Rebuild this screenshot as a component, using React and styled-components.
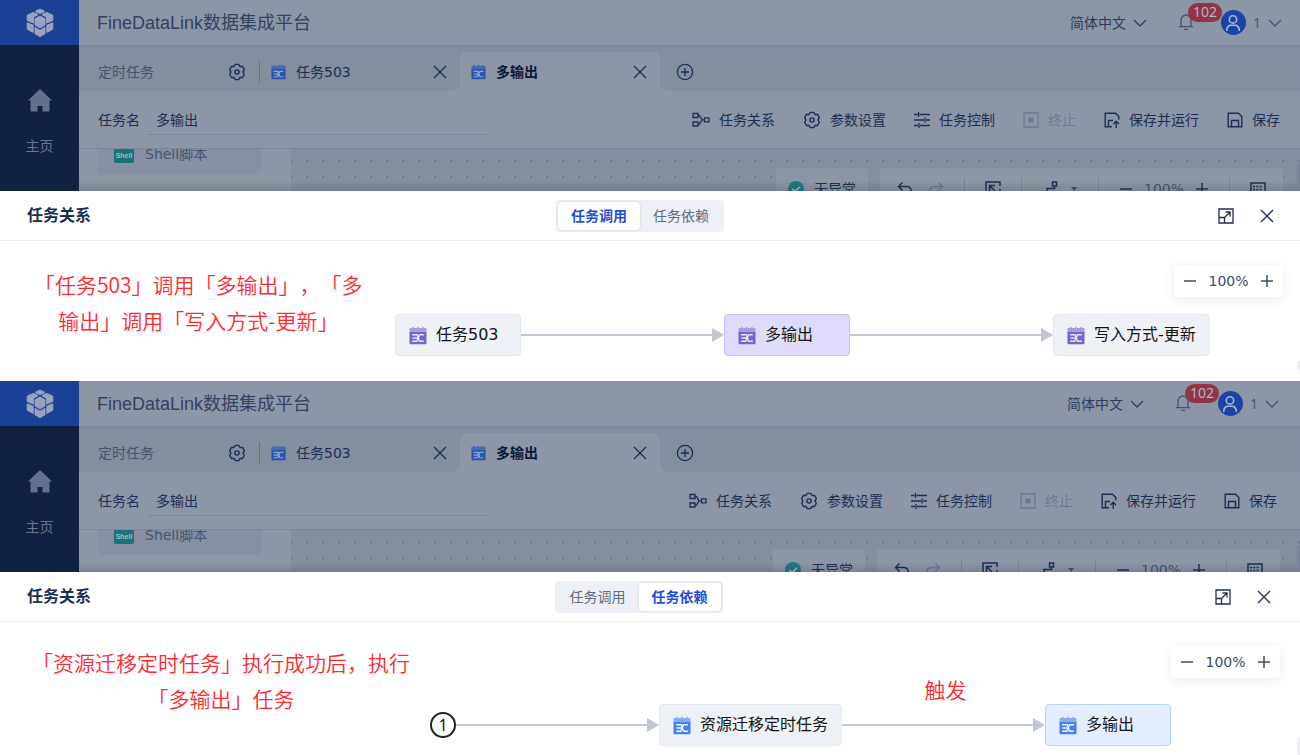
import React from "react";
import styled, { createGlobalStyle, css } from "styled-components";

const c = {
  ink: "#1c2f52",
  inkSoft: "#46536e",
  surface: "#8d96a7",
  bar: "#838e9f",
  line: "#7c879a",
  brand: "#1b4196",
  side: "#112142",
  edge: "#c0c7d3",
  red: "#ff2a30",
};

const GlobalStyle = createGlobalStyle`
  * { box-sizing: border-box; }
  body {
    margin: 0;
    background: #fff;
    overflow: hidden;
    font-family: "DejaVu Sans", "Noto Sans CJK SC", sans-serif;
    font-size: 14px;
    line-height: 20px;
    color: ${c.ink};
  }
  button, input, select { font: inherit; color: inherit; margin: 0; padding: 0; border: 0; background: none; }
  svg { display: block; flex: none; }
`;

/* ---------- icons ---------- */

const Svg = ({ w = 16, h = w, box, children, sw = 1.3, color = "currentColor" }) => (
  <svg width={w} height={h} viewBox={box || `0 0 ${w} ${h}`} fill="none" stroke={color} strokeWidth={sw} aria-hidden="true">
    {children}
  </svg>
);

const LogoIcon = () => (
  <svg width="28" height="30" viewBox="0 0 28 30" fill="#98a4bd" stroke="#98a4bd" strokeWidth="1" strokeLinejoin="round" aria-hidden="true">
    <path d="M9.6 3 14 1.2 18.4 3 18 4 14 5.6 10 4Z" />
    <path d="M7.4 4.4 12 6.6 7.4 9.4V15L1.2 12.4V7.2Z" />
    <path d="M20.6 4.4 16 6.6 20.6 9.4V15L26.8 12.4V7.2Z" />
    <path d="M14 8 19 10.8V17L14 19.8 9 17V10.8Z" />
    <path d="M1.2 14.8 7.2 17.2V24.4L1.2 21.2Z" />
    <path d="M26.8 14.8 20.8 17.2V24.4L26.8 21.2Z" />
    <path d="M9 19.4 14 22.2 19 19.4V25.8L14 28.6 9 25.8Z" />
  </svg>
);

const HomeIcon = () => (
  <svg width="24" height="23" viewBox="0 0 24 23" fill="#64718c" aria-hidden="true">
    <path d="M12 0 24 11.5H21.5V22.5H14.5V17H9.5V22.5H2.5V11.5H0Z" />
  </svg>
);

const tones = {
  dim: ["#4468b8", "#2b56ae", "#91a6d3"],
  purple: ["#a99be0", "#7564cc", "#e9e5fa"],
  blue: ["#83aef6", "#4a80ea", "#eef4ff"],
};

const TaskIcon = ({ tone, size = 18 }) => {
  const [top, main, mark] = tones[tone];
  return (
    <svg width={size} height={size + 1} viewBox="0 0 18 19" aria-hidden="true">
      <path d="M1.5 2H3L4 .3 5 2H8L9 .3 10 2H13L14 .3 15 2H16.5Q17.5 2 17.5 3V7H.5V3Q.5 2 1.5 2Z" fill={top} />
      <path d="M.5 6H17.5V17.3Q17.5 18.3 16.5 18.3H1.5Q.5 18.3 .5 17.3Z" fill={main} />
      <path d="M3.2 8.8H8.2L10.6 15.2H14.8M3.6 12H9M3.2 15.2H7.8L10.6 8.8H14.8" fill="none" stroke={mark} strokeWidth="1.4" />
    </svg>
  );
};

const GearIcon = () => (
  <Svg w={18} sw={1.4}>
    <path d="M7.3 1.4H10.7L12 3.5 14.5 3.4 16.3 6.4 15.1 8.9 16.3 11.5 14.5 14.5 12 14.4 10.7 16.6H7.3L6 14.4 3.5 14.5 1.7 11.5 2.9 8.9 1.7 6.4 3.5 3.4 6 3.5Z" strokeLinejoin="round" />
    <circle cx="9" cy="9" r="2.1" />
  </Svg>
);
const CloseIcon = () => <Svg w={14} sw={1.3}><path d="M1 1 13 13M13 1 1 13" /></Svg>;
const PlusCircleIcon = () => <Svg w={18}><circle cx="9" cy="9" r="7.6" /><path d="M9 5V13M5 9H13" /></Svg>;
const ChevronIcon = () => <Svg w={14} h={8}><path d="M1 1 7 7 13 1" /></Svg>;
const BellIcon = () => (
  <Svg w={16} h={18}><path d="M3 12.5V6A5 5 0 0 1 13 6V12.5M.8 12.6H15.2M6 15.3H10" /></Svg>
);
const UserIcon = () => (
  <Svg w={16} h={18} color="#a9b6d4" sw={1.6}><circle cx="8" cy="5.4" r="3.7" /><path d="M1.8 17V15.5A5 5 0 0 1 5 11.2H11A5 5 0 0 1 14.2 15.5V17" /></Svg>
);
const RelationIcon = () => (
  <Svg w={18} h={16}><path d="M1 1.5H6V5.5H1ZM1 10H6V14H1ZM12.5 5.8H17V9.8H12.5ZM6 3.5H7.5L10 7.8H12.5M6 12H7.5L10 7.8" /></Svg>
);
const ControlIcon = () => (
  <Svg w={16} sw={1.3}><path d="M0 2.5H3.5M5.5 2.5H16M0 8H10M12 8H16M0 13.5H4M6 13.5H16M4.5 0V5M11 5.5V10.5M5 11V16" /></Svg>
);
const StopIcon = () => (
  <Svg w={16} h={16}><path d="M1 1H15V15H1Z" /><path d="M5.5 5.5H10.5V10.5H5.5Z" fill="currentColor" stroke="none" /></Svg>
);
const SaveRunIcon = () => (
  <Svg w={16} sw={1.4}><path d="M8 14.8H1.2V1.2H11.5L14.8 4.5V7.5M4.5 14.5V8.5H9M12.2 16V9.5M9.5 12 12.2 9.3 15 12" /></Svg>
);
const SaveIcon = () => (
  <Svg w={16} sw={1.4}><path d="M1.2 1.2H11.5L14.8 4.5V14.8H1.2ZM4.5 14.5V8.5H11.5V14.5" /></Svg>
);
const CheckIcon = () => (
  <svg width="16" height="16" viewBox="0 0 16 16" aria-hidden="true">
    <circle cx="8" cy="8" r="8" fill="#1d7a85" />
    <path d="M4.3 8 7 10.6 11.8 5.8" fill="none" stroke="#a3b2be" strokeWidth="1.8" />
  </svg>
);
const UndoIcon = () => <Svg sw={1.5}><path d="M5.5 1.5 1.5 5.5 5.5 9.5M1.5 5.5H10Q14.5 5.5 14.5 12" /></Svg>;
const RedoIcon = () => <Svg sw={1.5}><path d="M10.5 1.5 14.5 5.5 10.5 9.5M14.5 5.5H6Q1.5 5.5 1.5 12" /></Svg>;
const FitIcon = () => <Svg sw={1.5}><path d="M1 15V1H15V5M15 8V15M4.5 10V4.5H10M4.5 4.5 10 10M12 12 14 14" /></Svg>;
const LinkIcon = () => <Svg sw={1.5}><path d="M10.5 1H14.5V5H10.5ZM12.5 5V7.5H5V11H1" /></Svg>;
const KeyboardIcon = () => <Svg sw={1.5}><path d="M1 2H15V14H1Z" /><path d="M3 5.5H13M3 8.5H13" strokeDasharray="2 1.3" /></Svg>;
const MinusIcon = () => <Svg w={14} sw={1.5}><path d="M1 7H13" /></Svg>;
const PlusIcon = () => <Svg w={14} sw={1.5}><path d="M1 7H13M7 1V13" /></Svg>;
const ExpandIcon = () => (
  <Svg w={16} sw={1.3}><path d="M1 1H15V15H1ZM1 9.5H6.5V15M6.5 9.5 11.8 4.2M7.5 4H12V8.5" /></Svg>
);

/* ---------- shell ---------- */

const Screen = styled.section`
  position: relative;
`;

const Backdrop = styled.div`
  display: flex;
  height: 191px;
  overflow: hidden;
  position: relative;
  background: ${c.surface};
  &::after {
    content: "";
    position: absolute;
    inset: auto 0 0;
    height: 10px;
    background: linear-gradient(transparent, rgba(30, 35, 55, 0.16));
    pointer-events: none;
  }
`;

const Sidebar = styled.nav`
  flex: none;
  width: 79px;
  background: ${c.side};
`;

const LogoBox = styled.div`
  height: 45px;
  display: grid;
  place-items: center;
  background: ${c.brand};
`;

const SideLink = styled.a`
  display: flex;
  flex-direction: column;
  align-items: center;
  gap: 24px;
  padding-top: 44px;
  color: #6a7690;
  text-decoration: none;
`;

const Main = styled.div`
  flex: 1;
  min-width: 0;
  display: flex;
  flex-direction: column;
`;

const TopBar = styled.header`
  flex: none;
  height: 45px;
  display: flex;
  align-items: center;
  padding: 0 ${(p) => 18 + p.$inset}px 0 18px;
  color: ${c.inkSoft};
`;

const AppTitle = styled.h1`
  flex: 1;
  margin: 0;
  font: 400 18px/24px "Liberation Sans", "Noto Sans CJK SC", sans-serif;
  color: #33425f;
`;

const LangPicker = styled.label`
  display: flex;
  align-items: center;
  gap: 6px;
  color: #2c3c5b;
  select { appearance: none; width: 57px; outline: none; }
`;

const BellButton = styled.button`
  position: relative;
  margin-left: 31px;
`;

const Badge = styled.span`
  position: absolute;
  left: 10px;
  top: -11px;
  height: 19px;
  padding: 0 5px;
  border-radius: 10px;
  background: #8f3547;
  color: #b5b5c3;
  line-height: 18px;
  font-family: "Noto Sans", sans-serif;
`;

const UserButton = styled.button`
  display: flex;
  align-items: center;
  gap: 7px;
  margin-left: 27px;
  font-family: "Noto Sans", sans-serif;
`;

const Avatar = styled.span`
  width: 25px;
  height: 25px;
  border-radius: 50%;
  display: grid;
  place-items: center;
  background: #1a45a4;
`;

const TabBar = styled.div`
  flex: none;
  display: flex;
  height: 46px;
  background: ${c.surface};
`;

const BarStart = styled.div`
  display: flex;
  align-items: center;
  width: 381px;
  padding: 8px 13px 0 19px;
  background: ${c.bar};
  border-radius: 0 0 8px 0;
  box-shadow: inset 0 3px 3px -2px ${c.line};
`;

const BarEnd = styled.div`
  flex: 1;
  display: flex;
  align-items: center;
  padding: 8px 16px 0;
  background: ${c.bar};
  border-radius: 0 0 0 8px;
  box-shadow: inset 0 3px 3px -2px ${c.line};
`;

const Category = styled.span`
  width: 130px;
  color: ${c.inkSoft};
`;

const VLine = styled.span`
  width: 1px;
  height: 22px;
  margin: ${(p) => p.$m || "0"};
  background: ${(p) => p.$color || "#65718a"};
`;

const ActiveWell = styled.div`
  width: 200px;
  padding-top: 7px;
  background: linear-gradient(${c.bar} 20px, ${c.surface} 20px);
  box-shadow: inset 0 3px 3px -2px ${c.line};
`;

const Tab = styled.div`
  display: flex;
  align-items: center;
  gap: 10px;
  flex: 1;
  span { flex: 1; }
  ${(p) =>
    p.$active &&
    css`
      height: 39px;
      padding: 1px 13px 0 11px;
      border-radius: 8px 8px 0 0;
      background: ${c.surface};
      span { font-weight: 700; color: #06183a; }
    `}
`;

const IconButton = styled.button`
  display: grid;
  place-items: center;
`;

const Toolbar = styled.div`
  flex: none;
  display: flex;
  align-items: center;
  justify-content: space-between;
  height: 58px;
  padding: 0 ${(p) => 20 + p.$inset}px 0 19px;
  border-bottom: 1px solid ${c.line};
`;

const NameField = styled.label`
  display: flex;
  align-items: center;
  gap: 7px;
  input {
    width: 342px;
    height: 30px;
    padding: 0 9px;
    border-bottom: 1px solid ${c.line};
    outline: none;
  }
`;

const ToolList = styled.div`
  display: flex;
  gap: 28px;
`;

const Tool = styled.button`
  display: flex;
  align-items: center;
  gap: 9px;
  color: ${(p) => (p.disabled ? "#6d788e" : c.ink)};
`;

const Workspace = styled.div`
  flex: 1;
  display: flex;
  min-height: 0;
`;

const Palette = styled.aside`
  flex: none;
  width: 212px;
  padding: 0 30px 0 19px;
  overflow: hidden;
`;

const PaletteItem = styled.div`
  display: flex;
  align-items: center;
  gap: 11px;
  height: 40px;
  margin: -15px 0 16px;
  padding: 0 16px;
  border-radius: 4px;
  background: #8690a2;
  color: ${c.inkSoft};
`;

const ShellBadge = styled.span`
  width: 20px;
  height: 18px;
  border-radius: 2px;
  background: #1c7278;
  color: #a9bcc4;
  font: 700 7px/22px "Liberation Sans", sans-serif;
  text-align: center;
`;

const DotCanvas = styled.div`
  flex: 1;
  display: flex;
  align-items: flex-start;
  justify-content: flex-end;
  gap: 12px;
  padding: 19px ${(p) => 17 + p.$inset}px 0 0;
  background: ${c.bar} radial-gradient(circle at 1px 1px, #707c92 1px, transparent 2px) 15px 11px / 16px 16px;
`;

const FloatBar = styled.div`
  display: flex;
  align-items: center;
  height: 42px;
  padding: 0 ${(p) => p.$pad || 12}px;
  gap: ${(p) => p.$gap || 10}px;
  border-radius: 4px;
  background: ${c.surface};
  color: ${c.ink};
`;

const Group = styled.div`
  display: flex;
  align-items: center;
  gap: ${(p) => p.$gap || 12}px;
`;

const Muted = styled.span`
  color: ${(p) => p.$color || c.inkSoft};
`;

/* ---------- drawer ---------- */

const Drawer = styled.div`
  background: #fff;
`;

const DrawerHead = styled.div`
  display: flex;
  align-items: center;
  height: 50px;
  padding: 0 ${(p) => 26 + p.$inset}px 0 27px;
  border-bottom: 1px solid #ebedf0;
`;

const DrawerTitle = styled.h2`
  flex: 1;
  margin: 0;
  font-size: 16px;
  line-height: 24px;
`;

const Segments = styled.div`
  display: flex;
  height: 32px;
  margin-right: 21px;
  padding: 2px;
  border-radius: 4px;
  background: #edf0f5;
`;

const Segment = styled.button`
  width: 82px;
  border-radius: 4px;
  color: #5d6b83;
  ${(p) =>
    p.$active &&
    css`
      background: #fff;
      color: #1f4fd8;
      font-weight: 700;
      box-shadow: 0 0 3px rgba(60, 75, 120, 0.18);
    `}
`;

const HeadActions = styled.div`
  flex: 1;
  display: flex;
  justify-content: flex-end;
  gap: 26px;
`;

const Graph = styled.div`
  position: relative;
  height: ${(p) => p.$h}px;
  padding: ${(p) => p.$top}px 0 0 ${(p) => p.$left}px;
  overflow: hidden;
`;

const Flow = styled.div`
  display: flex;
  align-items: center;
`;

const looks = {
  plain: ["#eef1f5", "#e4e8ee"],
  purple: ["#dfdbfa", "#c5bcf2"],
  blue: ["#e4eeff", "#b9d3fb"],
};

const Node = styled.div`
  flex: none;
  display: flex;
  align-items: center;
  gap: 9px;
  min-width: 126px;
  height: 42px;
  padding: 0 13px;
  border: 1px solid ${(p) => looks[p.$look][1]};
  border-radius: 4px;
  background: ${(p) => looks[p.$look][0]};
  color: #141414;
  font-size: 16px;
  line-height: 24px;
`;

const StartNode = styled.div`
  flex: none;
  width: 26px;
  height: 26px;
  border: 2px solid #222;
  border-radius: 50%;
  display: grid;
  place-items: center;
  color: #141414;
  font: 16px/20px "Noto Sans", sans-serif;
`;

const EdgeBox = styled.div`
  flex: none;
  position: relative;
  display: flex;
  align-items: center;
  width: 203px;
  &::before { content: ""; flex: 1; height: 2px; background: ${c.edge}; }
  &::after { content: ""; border: 7px solid transparent; border-left: 12px solid ${c.edge}; border-right: 0; }
`;

const noteText = css`
  position: absolute;
  margin: 0;
  font: 350 21px/36px "Noto Sans CJK SC", sans-serif;
  text-align: center;
  text-spacing-trim: space-all;
  white-space: nowrap;
  color: ${c.red};
`;

const EdgeLabel = styled.span`
  ${noteText}
  inset: auto 0 25px 4px;
`;

const Note = styled.p`
  ${noteText}
  left: ${(p) => p.$left}px;
  top: ${(p) => p.$top}px;
`;

const ZoomBar = styled.div`
  position: absolute;
  top: 24px;
  right: ${(p) => 17 + p.$inset}px;
  display: flex;
  align-items: center;
  justify-content: space-between;
  width: 109px;
  height: 32px;
  padding: 0 9px;
  border-radius: 4px;
  background: #fff;
  color: #3d4d6b;
  box-shadow: 0 2px 12px rgba(40, 60, 100, 0.1);
`;

const ScrollNub = styled.span`
  position: absolute;
  right: 0;
  top: ${(p) => p.$top}px;
  width: 3px;
  height: ${(p) => p.$h}px;
  border-radius: 3px 0 0 3px;
  background: ${(p) => p.$bg || "#eceef2"};
`;

const Edge = ({ label }) => <EdgeBox>{label && <EdgeLabel>{label}</EdgeLabel>}</EdgeBox>;

const TaskNode = ({ look = "plain", tone, children }) => (
  <Node $look={look}>
    <TaskIcon tone={tone} />
    {children}
  </Node>
);

const TaskScreen = ({ id, inset = 0, mode, children }) => (
  <Screen>
    <Backdrop>
      <Sidebar>
        <LogoBox><LogoIcon /></LogoBox>
        <SideLink href="#home"><HomeIcon />主页</SideLink>
      </Sidebar>
      <Main>
        <TopBar $inset={inset}>
          <AppTitle>FineDataLink数据集成平台</AppTitle>
          <LangPicker>
            <select aria-label="语言" defaultValue="zh"><option value="zh">简体中文</option></select>
            <ChevronIcon />
          </LangPicker>
          <BellButton aria-label="消息"><BellIcon /><Badge>102</Badge></BellButton>
          <UserButton><Avatar><UserIcon /></Avatar>1<ChevronIcon /></UserButton>
        </TopBar>
        <TabBar>
          <BarStart>
            <Category>定时任务</Category>
            <IconButton aria-label="设置"><GearIcon /></IconButton>
            <VLine $m="0 11px 0 13px" />
            <Tab>
              <TaskIcon tone="dim" size={15} />
              <span>任务503</span>
              <IconButton aria-label="关闭"><CloseIcon /></IconButton>
            </Tab>
          </BarStart>
          <ActiveWell>
            <Tab $active>
              <TaskIcon tone="dim" size={15} />
              <span>多输出</span>
              <IconButton aria-label="关闭"><CloseIcon /></IconButton>
            </Tab>
          </ActiveWell>
          <BarEnd><IconButton aria-label="新建"><PlusCircleIcon /></IconButton></BarEnd>
        </TabBar>
        <Toolbar $inset={inset}>
          <NameField htmlFor={`${id}-name`}>
            任务名
            <input id={`${id}-name`} type="text" defaultValue="多输出" />
          </NameField>
          <ToolList>
            <Tool><RelationIcon />任务关系</Tool>
            <Tool><GearIcon />参数设置</Tool>
            <Tool><ControlIcon />任务控制</Tool>
            <Tool disabled><StopIcon />终止</Tool>
            <Tool><SaveRunIcon />保存并运行</Tool>
            <Tool><SaveIcon />保存</Tool>
          </ToolList>
        </Toolbar>
        <Workspace>
          <Palette>
            <PaletteItem><ShellBadge>Shell</ShellBadge>Shell脚本</PaletteItem>
          </Palette>
          <DotCanvas $inset={inset}>
            <FloatBar><CheckIcon />无异常</FloatBar>
            <FloatBar $pad={17} $gap={20}>
              <Group $gap={15}><UndoIcon /><Muted $color="#6d788e"><RedoIcon /></Muted></Group>
              <VLine $color="#79849a" />
              <FitIcon />
              <VLine $color="#79849a" />
              <Group $gap={12}><LinkIcon /><Svg w={8} h={6}><path d="M1 1H7L4 5Z" fill={c.inkSoft} stroke="none" /></Svg></Group>
              <VLine $color="#79849a" />
              <Group $gap={11}><MinusIcon /><Muted>100%</Muted><PlusIcon /></Group>
              <VLine $color="#79849a" />
              <KeyboardIcon />
            </FloatBar>
          </DotCanvas>
        </Workspace>
      </Main>
      <ScrollNub $top={164} $h={20} $bg="#7a859a" />
    </Backdrop>
    <Drawer>
      <DrawerHead $inset={inset}>
        <DrawerTitle>任务关系</DrawerTitle>
        <Segments>
          <Segment $active={mode === "call"}>任务调用</Segment>
          <Segment $active={mode === "depend"}>任务依赖</Segment>
        </Segments>
        <HeadActions>
          <IconButton aria-label="全屏"><ExpandIcon /></IconButton>
          <IconButton aria-label="关闭"><CloseIcon /></IconButton>
        </HeadActions>
      </DrawerHead>
      {children}
    </Drawer>
  </Screen>
);

const GraphZoom = ({ inset = 0 }) => (
  <ZoomBar $inset={inset}>
    <IconButton aria-label="缩小"><MinusIcon /></IconButton>
    100%
    <IconButton aria-label="放大"><PlusIcon /></IconButton>
  </ZoomBar>
);

export default function App() {
  return (
    <>
      <GlobalStyle />
      <TaskScreen id="call" mode="call">
        <Graph $h={140} $top={73} $left={395}>
          <Flow>
            <TaskNode tone="purple">任务503</TaskNode>
            <Edge />
            <TaskNode look="purple" tone="purple">多输出</TaskNode>
            <Edge />
            <TaskNode tone="purple">写入方式-更新</TaskNode>
          </Flow>
          <Note $left={34} $top={25}>「任务503」调用「多输出」，「多<br />输出」调用「写入方式-更新」</Note>
          <GraphZoom />
          <ScrollNub $top={120} $h={9} />
        </Graph>
      </TaskScreen>
      <TaskScreen id="depend" mode="depend" inset={3}>
        <Graph $h={133} $top={82} $left={430}>
          <Flow>
            <StartNode>1</StartNode>
            <Edge />
            <TaskNode tone="blue">资源迁移定时任务</TaskNode>
            <Edge label="触发" />
            <TaskNode look="blue" tone="blue">多输出</TaskNode>
          </Flow>
          <Note $left={32} $top={22}>「资源迁移定时任务」执行成功后，执行<br />「多输出」任务</Note>
          <GraphZoom inset={3} />
          <ScrollNub $top={116} $h={17} />
        </Graph>
      </TaskScreen>
    </>
  );
}
